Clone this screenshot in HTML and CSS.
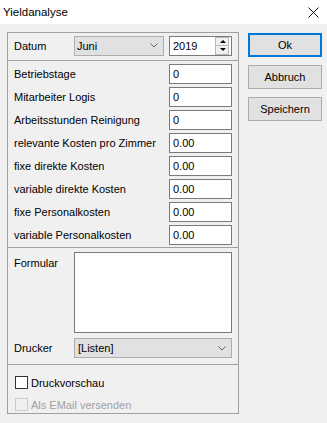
FILE: index.html
```html
<!DOCTYPE html>
<html lang="de">
<head>
    <meta charset="UTF-8">
    <meta name="viewport" content="width=device-width, initial-scale=1.0">
    <title>Yieldanalyse</title>
    <link rel="stylesheet" href="styles.css">
</head>
<body>
    <div class="window">
        <div class="titlebar">
            <span class="title">Yieldanalyse</span>
            <svg class="close" width="11" height="11" viewBox="0 0 11 11">
                <path d="M0.5 0.5 L10.5 10.5 M10.5 0.5 L0.5 10.5" stroke="#111" stroke-width="1" fill="none"/>
            </svg>
        </div>

        <div class="client">
            <div class="frame">
                <div class="sec sec-date">
                    <span class="lbl lbl-short">Datum</span>
                    <div class="combo combo-month">
                        <span>Juni</span>
                        <svg class="chev" width="8" height="5" viewBox="0 0 8 5"><path d="M0.5 0.5 L4 4 L7.5 0.5" stroke="#606060" fill="none"/></svg>
                    </div>
                    <div class="spin">
                        <span>2019</span>
                        <div class="spin-btns">
                            <span class="spin-up"></span>
                            <span class="spin-down"></span>
                        </div>
                    </div>
                </div>

                <div class="sec sec-fields">
                    <div class="row"><span class="lbl">Betriebstage</span><div class="edit">0</div></div>
                    <div class="row"><span class="lbl">Mitarbeiter Logis</span><div class="edit">0</div></div>
                    <div class="row"><span class="lbl">Arbeitsstunden Reinigung</span><div class="edit">0</div></div>
                    <div class="row"><span class="lbl">relevante Kosten pro Zimmer</span><div class="edit">0.00</div></div>
                    <div class="row"><span class="lbl">fixe direkte Kosten</span><div class="edit">0.00</div></div>
                    <div class="row"><span class="lbl">variable direkte Kosten</span><div class="edit">0.00</div></div>
                    <div class="row"><span class="lbl">fixe Personalkosten</span><div class="edit">0.00</div></div>
                    <div class="row"><span class="lbl">variable Personalkosten</span><div class="edit">0.00</div></div>
                </div>

                <div class="sec sec-print">
                    <div class="row row-memo">
                        <span class="lbl lbl-short">Formular</span>
                        <div class="memo"></div>
                    </div>
                    <div class="row">
                        <span class="lbl lbl-short">Drucker</span>
                        <div class="combo combo-wide">
                            <span>[Listen]</span>
                            <svg class="chev" width="8" height="5" viewBox="0 0 8 5"><path d="M0.5 0.5 L4 4 L7.5 0.5" stroke="#606060" fill="none"/></svg>
                        </div>
                    </div>
                </div>

                <div class="sec sec-opts">
                    <div class="check"><span class="box"></span>Druckvorschau</div>
                    <div class="check disabled"><span class="box"></span>Als EMail versenden</div>
                </div>
            </div>

            <div class="buttons">
                <button type="button" class="btn btn-default">Ok</button>
                <button type="button" class="btn">Abbruch</button>
                <button type="button" class="btn">Speichern</button>
            </div>
        </div>
    </div>
</body>
</html>
```

FILE: styles.css
```css
body {
    margin: 0;
    padding: 0;
    font-family: 'Liberation Sans', Arial, sans-serif;
    font-size: 11px;
    color: #000000;
    background-color: #f0f0f0;
}

.window {
    width: 327px;
    height: 423px;
    overflow: hidden;
    background-color: #f0f0f0;
}

.titlebar {
    height: 24px;
    background-color: #ffffff;
    display: flex;
    align-items: center;
    justify-content: space-between;
    padding: 0 8px 0 3px;
}

.title {
    font-size: 11.5px;
    color: #000000;
}

.close {
    display: block;
}

.client {
    display: flex;
    align-items: flex-start;
    padding: 8px 0 0 7px;
}

.frame {
    width: 232px;
    height: 382px;
    box-sizing: border-box;
    border: 1px solid #a0a0a0;
    display: flex;
    flex-direction: column;
}

.sec {
    border-top: 1px solid #a0a0a0;
    padding-left: 6px;
}

.sec:first-child {
    border-top: none;
}

.lbl {
    width: 155px;
    flex-shrink: 0;
    white-space: nowrap;
}

.lbl-short {
    width: 60px;
}

/* Datum */
.sec-date {
    height: 27px;
    display: flex;
    align-items: center;
    padding-top: 0;
    box-sizing: border-box;
    padding-bottom: 2px;
}

.combo {
    height: 20px;
    box-sizing: border-box;
    background-color: #e1e1e1;
    border: 1px solid #adadad;
    display: flex;
    align-items: center;
    justify-content: space-between;
    padding: 0 5px 0 2px;
}

.combo-month {
    width: 90px;
}

.combo-wide {
    width: 158px;
    padding-left: 3px;
}

.chev {
    display: block;
}

.spin {
    width: 63px;
    height: 20px;
    margin-left: 5px;
    box-sizing: border-box;
    border: 1px solid #7a7a7a;
    background-color: #ffffff;
    display: flex;
    align-items: center;
    justify-content: space-between;
    padding-left: 3px;
}

.spin-btns {
    width: 14px;
    height: 18px;
    display: flex;
    flex-direction: column;
    margin-right: 2px;
}

.spin-up, .spin-down {
    flex: 1;
    background-color: #f0f0f0;
    border: 1px solid #b9b9b9;
    position: relative;
}

.spin-down {
    border-top: none;
}

.spin-up::after, .spin-down::after {
    content: "";
    position: absolute;
    left: 4px;
    top: 2px;
    border-left: 3px solid transparent;
    border-right: 3px solid transparent;
}

.spin-up::after {
    border-bottom: 3px solid #000000;
}

.spin-down::after {
    top: 2px;
    border-top: 3px solid #000000;
}

/* Felder */
.sec-fields {
    height: 187px;
    box-sizing: border-box;
    padding-top: 3px;
    display: flex;
    flex-direction: column;
    gap: 3px;
}

.row {
    display: flex;
    align-items: center;
}

.edit {
    width: 63px;
    height: 20px;
    box-sizing: border-box;
    border: 1px solid #7a7a7a;
    background-color: #ffffff;
    padding-left: 3px;
    line-height: 18px;
}

/* Formular / Drucker */
.sec-print {
    height: 117px;
    box-sizing: border-box;
    padding-top: 4px;
    display: flex;
    flex-direction: column;
    gap: 5px;
}

.row-memo {
    align-items: flex-start;
}

.row-memo .lbl {
    padding-top: 5px;
}

.memo {
    width: 158px;
    height: 81px;
    box-sizing: border-box;
    border: 1px solid #7a7a7a;
    background-color: #ffffff;
}

/* Optionen */
.sec-opts {
    flex: 1;
    padding-top: 9px;
    padding-left: 7px;
    display: flex;
    flex-direction: column;
    gap: 5px;
}

.check {
    display: flex;
    align-items: center;
    height: 17px;
}

.box {
    width: 13px;
    height: 13px;
    box-sizing: border-box;
    border: 1px solid #333333;
    background-color: #ffffff;
    margin-right: 3px;
}

.check.disabled {
    color: #a0a0a0;
}

.check.disabled .box {
    border-color: #cccccc;
    background-color: #f0f0f0;
}

/* Buttons */
.buttons {
    margin-left: 9px;
    display: flex;
    flex-direction: column;
    gap: 8px;
    padding-top: 1px;
}

.btn {
    width: 74px;
    height: 24px;
    box-sizing: border-box;
    background-color: #e1e1e1;
    border: 1px solid #adadad;
    font-family: 'Liberation Sans', Arial, sans-serif;
    font-size: 11px;
    color: #000000;
    padding: 0;
}

.btn-default {
    border: 2px solid #0078d7;
}
```
